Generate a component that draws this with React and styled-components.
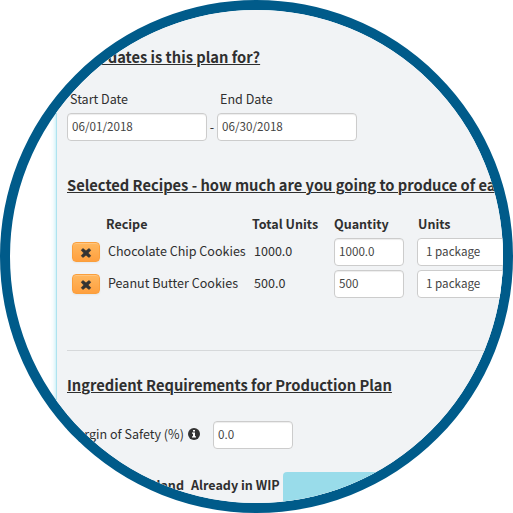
import React from 'react';
import styled, { createGlobalStyle } from 'styled-components';

const GlobalStyle = createGlobalStyle`
  body { margin: 0; background: #fff; }
  *, *::before, *::after { box-sizing: border-box; }
`;

const Lens = styled.main`
  width: 513px;
  height: 513px;
  border: 10px solid #005b8a;
  border-radius: 50%;
  overflow: hidden;
  background: #fff;
  color: #2f2f2f;
  font: 12.55px/20px "Noto Sans CJK SC", "Open Sans", sans-serif;
  white-space: nowrap;
`;

const Panel = styled.div`
  width: 700px;
  height: 493px;
  margin-left: 46px;
  padding: 37px 0 0 10px;
  border-left: 1px solid #aee3ef;
  background: #f1f3f5;
  box-shadow: 0 0 5px rgba(120, 214, 234, 0.65);
`;

const Heading = styled.h2`
  width: max-content;
  height: 20px;
  margin: 0;
  font-size: 14.68px;
  line-height: 20px;
  font-weight: 700;
  text-decoration: underline;
  text-decoration-thickness: 1px;
  text-underline-offset: 1px;
`;

const Text = styled.span`
  font-weight: ${(p) => (p.$bold ? 700 : 400)};
`;

const Dates = styled.div`
  display: grid;
  grid-template-columns: 140px 10px 140px;
  grid-template-rows: 20px 28px;
  row-gap: 4px;
  margin: 22px 0 34px;
  align-items: center;
`;

const Label = styled.label`
  padding-left: 3px;
  grid-column: ${(p) => p.$col};
`;

const Dash = styled.span`
  text-align: center;
`;

const Field = styled.input`
  display: block;
  width: ${(p) => p.$w}px;
  height: 28px;
  margin: 0;
  padding: 0 4px 4px;
  border: 1px solid #ccc;
  border-radius: 4px;
  background: #fff;
  box-shadow: inset 0 1px 1px rgba(0, 0, 0, 0.075);
  color: #444;
  font: 11.65px/20px "Noto Sans CJK SC", "Open Sans", sans-serif;
`;

const UnitSelect = styled.div`
  width: 220px;
  height: 28px;
  padding: 2px 8px;
  border: 1px solid #ccc;
  border-radius: 4px;
  background: #fff;
  color: #444;
  font-size: 11.65px;
  line-height: 20px;
`;

const Recipes = styled.div`
  display: grid;
  grid-template-columns: 41px 144px 82px 83px 220px;
  grid-template-rows: 20px 28px 28px;
  row-gap: 4px;
  margin-top: 19px;
  align-items: center;
`;

const HeadCell = styled(Text)`
  margin-left: ${(p) => p.$shift || 0}px;
`;

const Cell = styled(Text)`
  padding: 0 0 2px ${(p) => p.$pad || 0}px;
`;

const RemoveButton = styled.button`
  display: flex;
  align-items: center;
  justify-content: center;
  width: 28px;
  height: 20px;
  margin: 0 0 0 5px;
  padding: 1px 0 0;
  border: 1px solid #fa9f3c;
  border-radius: 4px;
  background: linear-gradient(#ffb860, #ffa03f);
  box-shadow: inset 0 1px 0 rgba(255, 255, 255, 0.2), 0 1px 2px rgba(0, 0, 0, 0.05);
`;

const Rule = styled.hr`
  width: 100%;
  height: 1px;
  margin: 52px 0 24px;
  border: 0;
  background: #d6d8da;
`;

const Margin = styled.div`
  display: grid;
  grid-template-columns: 121px 25px 80px;
  align-items: center;
  margin-top: 26px;
`;

const InfoMark = styled.svg`
  display: block;
  width: 12px;
  height: 12px;
  margin-bottom: 2px;
`;

const Totals = styled.div`
  display: grid;
  grid-template-columns: 124px 92px 400px;
  margin-top: 23px;
`;

const TotalLabel = styled(Text)`
  padding-top: 3px;
  text-align: ${(p) => (p.$end ? 'right' : 'left')};
  padding-right: ${(p) => (p.$end ? 7 : 0)}px;
`;

const Banner = styled.div`
  height: 60px;
  border-radius: 4px 0 0 0;
  background: #99dcea;
`;

const CrossIcon = () => (
  <svg width="12" height="12" viewBox="0 0 12 12" aria-hidden="true">
    <path
      d="M3 1.4 1.1 3.2 3.7 6 1.1 8.8 3 10.6 6 8.2 9 10.6 10.9 8.8 8.3 6 10.9 3.2 9 1.4 6 3.8Z"
      fill="#333"
      stroke="#333"
      strokeWidth="0.5"
      strokeLinejoin="round"
    />
  </svg>
);

const InfoIcon = () => (
  <InfoMark viewBox="0 0 12 12" aria-hidden="true">
    <circle cx="6" cy="6" r="6" fill="#333" />
    <path d="M5 2h2v1.6H5zM4 4.6h3v3.6h1v1.3H4V8.2h1V5.8H4z" fill="#fff" />
  </InfoMark>
);

const recipes = [
  { name: 'Chocolate Chip Cookies', total: '1000.0', quantity: '1000.0' },
  { name: 'Peanut Butter Cookies', total: '500.0', quantity: '500' },
];

const RecipeRow = ({ recipe }) => (
  <>
    <RemoveButton aria-label={`Remove ${recipe.name}`}>
      <CrossIcon />
    </RemoveButton>
    <Cell>{recipe.name}</Cell>
    <Cell $pad={2}>{recipe.total}</Cell>
    <Field $w={70} defaultValue={recipe.quantity} />
    <UnitSelect>1 package</UnitSelect>
  </>
);

export default function App() {
  return (
    <>
      <GlobalStyle />
      <Lens>
        <Panel>
          <Heading>What dates is this plan for?</Heading>
          <Dates>
            <Label $col={1}>Start Date</Label>
            <Label $col={3}>End Date</Label>
            <Field $w={140} defaultValue="06/01/2018" />
            <Dash>-</Dash>
            <Field $w={140} defaultValue="06/30/2018" />
          </Dates>
          <Heading>Selected Recipes - how much are you going to produce of each?</Heading>
          <Recipes>
            <span />
            <HeadCell $bold $shift={-2}>Recipe</HeadCell>
            <HeadCell $bold>Total Units</HeadCell>
            <HeadCell $bold>Quantity</HeadCell>
            <HeadCell $bold $shift={1}>Units</HeadCell>
            {recipes.map((r) => (
              <RecipeRow key={r.name} recipe={r} />
            ))}
          </Recipes>
          <Rule />
          <Heading>Ingredient Requirements for Production Plan</Heading>
          <Margin>
            <Cell>Margin of Safety (%)</Cell>
            <InfoIcon />
            <Field $w={80} defaultValue="0.0" />
          </Margin>
          <Totals>
            <TotalLabel $bold $end>On Hand</TotalLabel>
            <TotalLabel $bold>Already in WIP</TotalLabel>
            <Banner />
          </Totals>
        </Panel>
      </Lens>
    </>
  );
}
